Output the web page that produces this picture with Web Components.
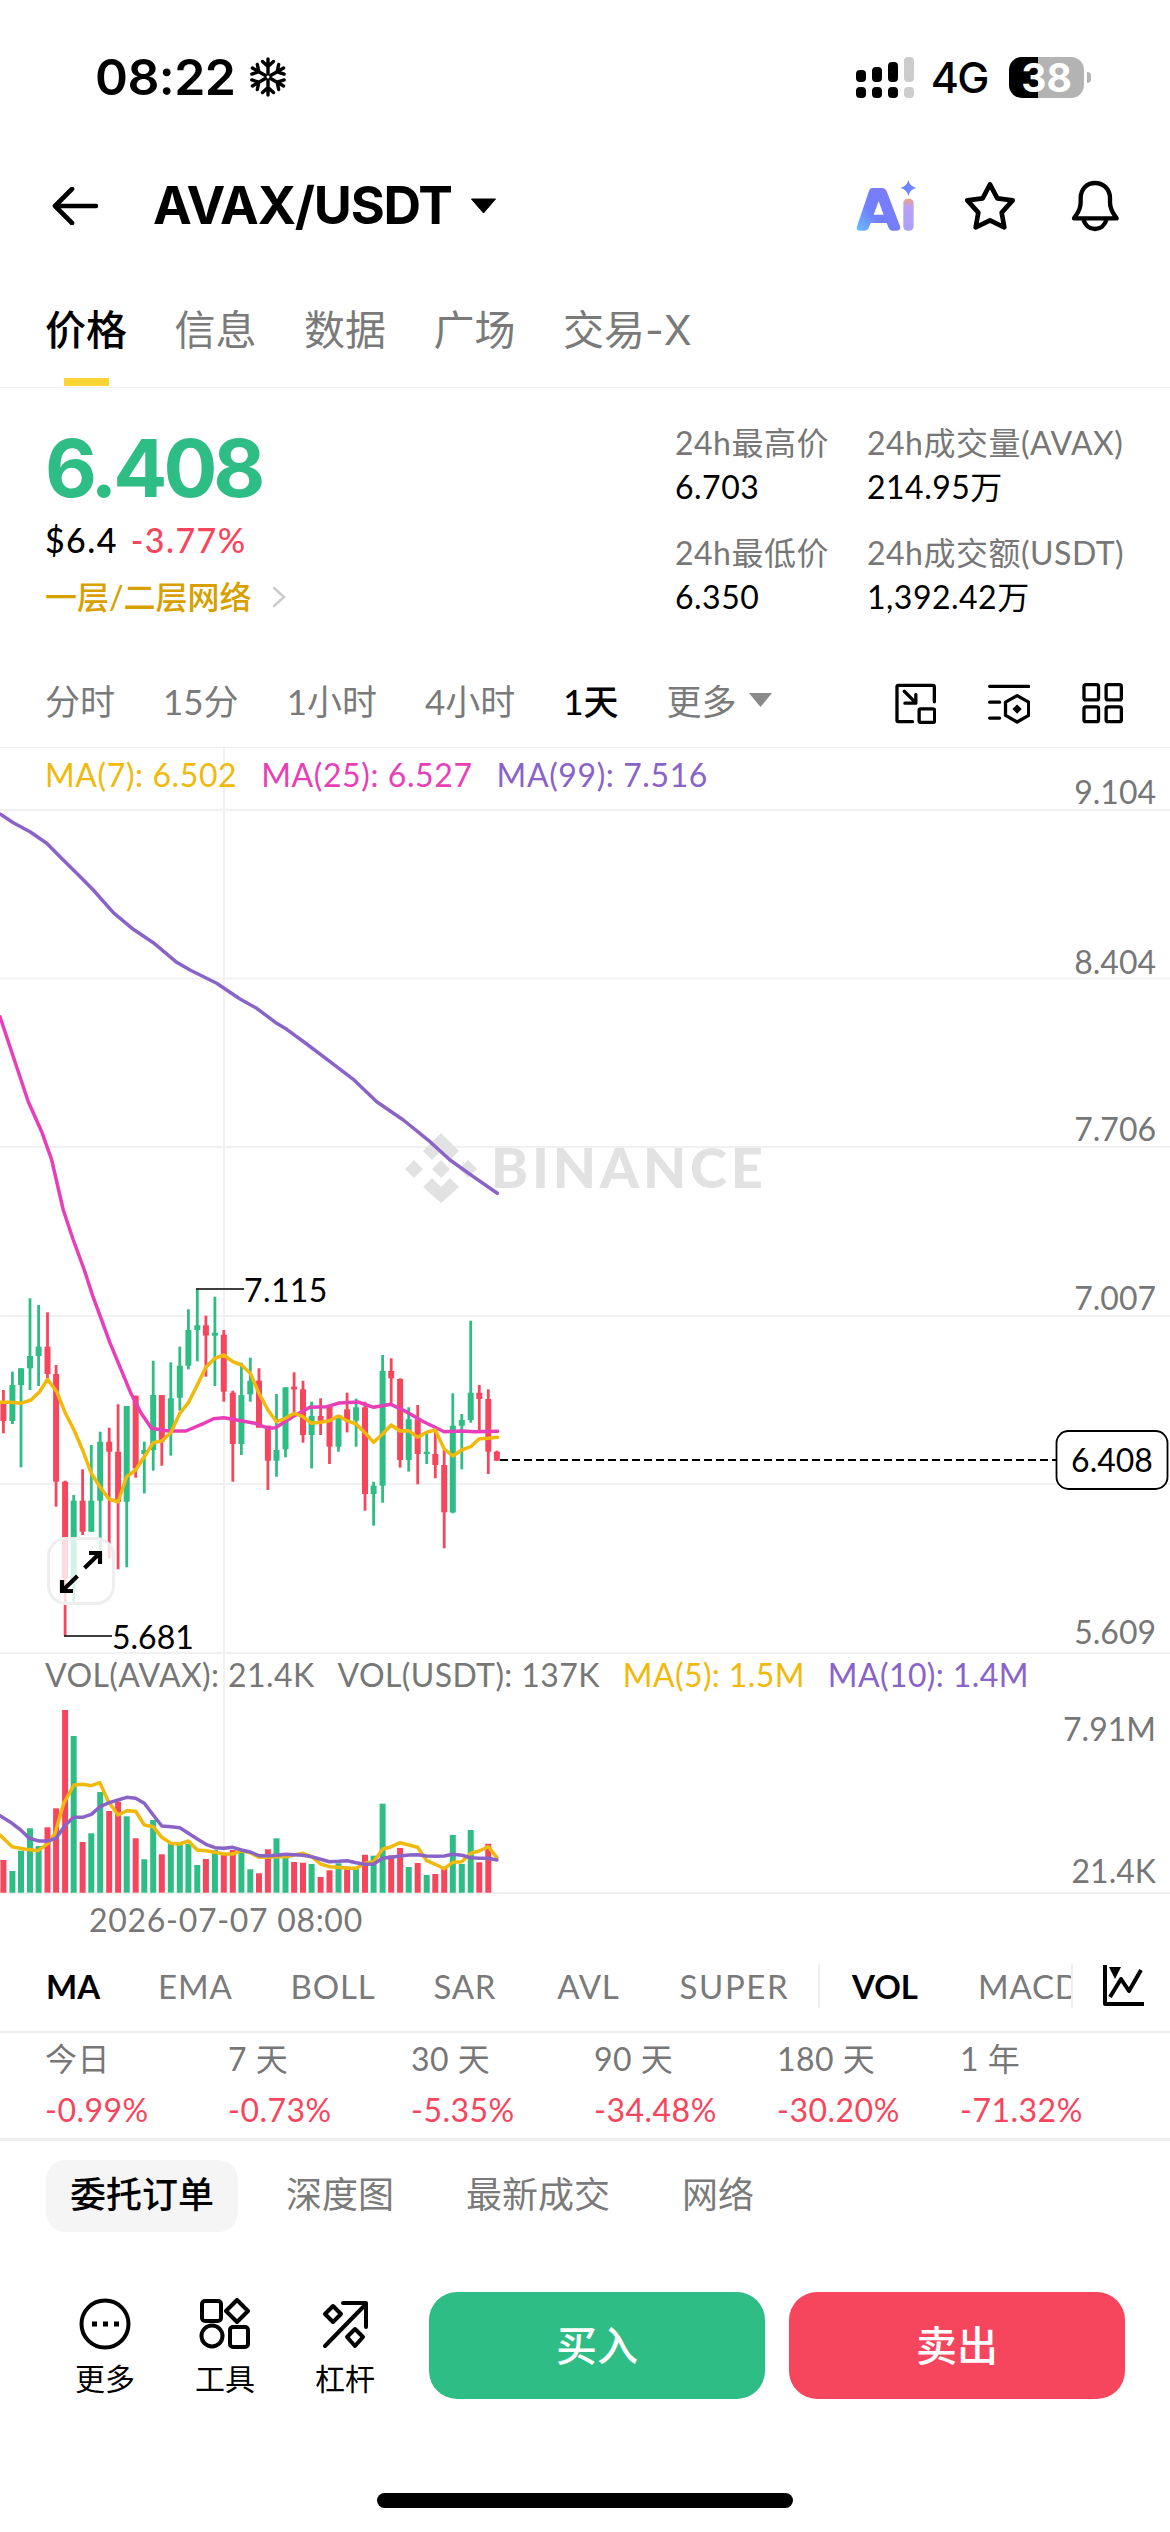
<!DOCTYPE html>
<html lang="zh">
<head>
<meta charset="utf-8">
<title>AVAX/USDT</title>
<style>
  html, body { margin: 0; background: #fff; }
  body {
    width: 1170px; height: 2532px; overflow: hidden; color: #000;
    font-family: Lato, "Noto Sans CJK SC", sans-serif;
  }
</style>
</head>
<body>
<status-bar></status-bar>
<pair-header></pair-header>
<market-tabs></market-tabs>
<price-summary>
  <stat-cell slot="stats"><span slot="label">24h最高价</span>6.703</stat-cell>
  <stat-cell slot="stats"><span slot="label">24h成交量(AVAX)</span>214.95万</stat-cell>
  <stat-cell slot="stats"><span slot="label">24h最低价</span>6.350</stat-cell>
  <stat-cell slot="stats"><span slot="label">24h成交额(USDT)</span>1,392.42万</stat-cell>
</price-summary>
<interval-bar></interval-bar>
<candle-chart></candle-chart>
<indicator-bar></indicator-bar>
<perf-row></perf-row>
<order-tabs></order-tabs>
<action-bar></action-bar>
<home-indicator></home-indicator>

<script>
const GREEN = '#2ebd85';
const RED = '#f6465d';

class Panel extends HTMLElement {
    connectedCallback() {
        this.attachShadow({ mode: 'open' });
        this.shadowRoot.innerHTML = `<style>${this.css()}</style>${this.html()}`;
    }
}

class StatusBar extends Panel {
    css() {
        return `
            :host { display: flex; height: 140px; box-sizing: border-box; padding: 57px 79px 0 95px; align-items: flex-start; }
            .time { font: 600 50px/40px Inter, sans-serif; letter-spacing: -0.6px; margin-right: 14px; }
            .right { margin-left: auto; display: flex; }
            .net { font: 500 43px/40px Inter, sans-serif; letter-spacing: -1.5px; margin: 0 21px 0 17px; }
            .batt { width: 75px; height: 41px; border-radius: 13px; background: linear-gradient(90deg, #000 29px, #b3b3b3 29px); color: #fff; font: 700 39px/41px Inter, sans-serif; text-align: center; }
            .nub { width: 4px; height: 11px; margin: 15px 0 0 3px; background: #b3b3b3; border-radius: 0 6px 6px 0; }
        `;
    }
    html() {
        return `
            <span class="time">08:22</span>
            <svg width="38" height="40" viewBox="-19 -20 38 40" fill="none" stroke="#000" stroke-width="3.4" stroke-linecap="round">
                ${[0, 60, 120, 180, 240, 300].map(a => `<g transform="rotate(${a})"><path d="M0 -3V-18M-5.5 -15.5L0 -10.5L5.5 -15.5"/></g>`).join('')}
            </svg>
            <div class="right">
                <svg width="58" height="41" viewBox="0 0 58 41">
                    <rect x="0" y="13" width="10" height="12" rx="4"/><rect x="16" y="10" width="10" height="15" rx="4"/><rect x="32" y="5" width="10" height="20" rx="4"/>
                    <rect x="48" y="0" width="10" height="25" rx="4" fill="#ccc"/>
                    <rect x="0" y="30" width="10" height="11" rx="4"/><rect x="16" y="30" width="10" height="11" rx="4"/><rect x="32" y="30" width="10" height="11" rx="4"/>
                    <rect x="48" y="30" width="10" height="11" rx="4" fill="#ccc"/>
                </svg>
                <span class="net">4G</span>
                <div class="batt">38</div>
                <div class="nub"></div>
            </div>
        `;
    }
}

class PairHeader extends Panel {
    css() {
        return `
            :host { display: flex; align-items: center; height: 130px; box-sizing: border-box; padding: 2px 0 0 52px; }
            .title { font: 700 52px/60px Inter, sans-serif; letter-spacing: -1.2px; margin-left: 55px; }
            .caret { margin-left: 18px; }
            .icons { margin-left: auto; display: flex; align-items: center; }
            svg { display: block; }
        `;
    }
    html() {
        return `
            <svg width="46" height="38" viewBox="51 188 46 38" fill="none" stroke="#000" stroke-width="4.6" stroke-linecap="round" stroke-linejoin="round"><path d="M95 207H54M71 190L54 207L71 224"/></svg>
            <span class="title">AVAX/USDT</span>
            <svg class="caret" width="27" height="16" viewBox="0 0 26 16"><path d="M1 1H25L13 15Z" stroke="#000" stroke-linejoin="round"/></svg>
            <div class="icons">
                <svg width="62" height="54" viewBox="105 448 186 162" style="margin-right:47px">
                    <defs>
                        <linearGradient id="ga" x1="0" y1="1" x2="0.8" y2="0.3"><stop offset="0" stop-color="#66c0ff"/><stop offset=".5" stop-color="#717fff"/><stop offset="1" stop-color="#7c7cf8"/></linearGradient>
                        <linearGradient id="gi" x1="0" y1="0" x2="0" y2="1"><stop offset="0" stop-color="#f2a27a"/><stop offset=".25" stop-color="#b9a0f5"/><stop offset="1" stop-color="#a9a3fb"/></linearGradient>
                    </defs>
                    <path fill="url(#ga)" fill-rule="evenodd" d="M154 475H182Q194 475 198 487L237 590Q240 603 226 603H214Q206 603 203 595L197 580H149L143 595Q140 603 132 603H118Q104 603 108 590L143 487Q146 475 154 475ZM173 515L158 555H188Z"/>
                    <rect x="247" y="507" width="31" height="96" rx="13" fill="url(#gi)"/>
                    <path fill="#6f86ff" d="M262 451Q266 470 286 475Q266 480 262 499Q258 480 238 475Q258 470 262 451Z"/>
                </svg>
                <svg width="50" height="50" viewBox="435 458 150 150" fill="none" stroke="#000" stroke-width="14" stroke-linejoin="round" style="margin-right:55px"><path d="M510 468L532 510L578 516L545 553L553 597L510 576L467 597L475 553L442 516L488 510Z"/></svg>
                <svg width="50" height="52" viewBox="750 453 150 156" fill="none" stroke="#000" stroke-width="13" stroke-linejoin="round" stroke-linecap="round" style="margin-right:50px"><path d="M762 568C772 552 782 545 782 520V508C782 480 800 462 825 462C850 462 870 480 870 508V520C870 545 880 552 890 568ZM790 570C795 590 810 600 825 600C840 600 855 590 860 570"/></svg>
            </div>
        `;
    }
}

class MarketTabs extends Panel {
    css() {
        return `
            :host { display: flex; gap: 47.5px; height: 118px; box-sizing: border-box; padding: 32px 0 0 45px; border-bottom: 1px solid #eee; font: 400 41px/50px "Noto Sans CJK SC", sans-serif; color: #7a7a7a; }
            .on { color: #000; font-weight: 500; position: relative; }
            .on::after { content: ""; position: absolute; left: 19px; width: 45px; height: 8px; top: 76px; background: #fcd535; }
            i { font: 400 41px/50px Inter, sans-serif; }
        `;
    }
    html() {
        return `<span class="on">价格</span><span>信息</span><span>数据</span><span>广场</span><span>交易<i>-X</i></span>`;
    }
}

class StatCell extends Panel {
    css() {
        return `
            :host { display: block; font-size: 32px; line-height: 44px; color: #000; letter-spacing: .5px; }
            .label { color: #777; display: block; }
        `;
    }
    html() { return `<span class="label"><slot name="label"></slot></span><slot></slot>`; }
}

class PriceSummary extends Panel {
    css() {
        return `
            :host { display: flex; height: 272px; box-sizing: border-box; padding: 33px 0 0 45px; }
            .left { width: 630px; padding-top: 7px; }
            .price { font: 700 80px/80px Inter, sans-serif; color: ${GREEN}; letter-spacing: -4px; }
            .sub { margin-top: 12px; font-size: 34px; line-height: 40px; font-weight: 500; letter-spacing: 1.4px; }
            .sub b { color: ${RED}; font-weight: 500; margin-left: 13px; }
            .net { margin-top: 17px; font-size: 32px; line-height: 40px; font-weight: 500; color: #d89f00; display: flex; align-items: center; }
            .net svg { margin-left: 20px; }
            .stats { display: grid; grid-template-columns: 192px auto; row-gap: 22px; align-content: start; }
        `;
    }
    html() {
        return `
            <div class="left">
                <div class="price">6.408</div>
                <div class="sub">$6.4<b>-3.77%</b></div>
                <div class="net">一层/二层网络<svg width="14" height="22" viewBox="0 0 14 22" fill="none" stroke="#ccc" stroke-width="2.6" stroke-linecap="round"><path d="M2 2L12 11L2 20"/></svg></div>
            </div>
            <div class="stats"><slot name="stats"></slot></div>
        `;
    }
}

class IntervalBar extends Panel {
    css() {
        return `
            :host { display: flex; align-items: center; height: 88px; box-sizing: border-box; padding: 0 47px 0 45px; border-bottom: 1px solid #eee; font-size: 35px; color: #7a7a7a; }
            .list { display: flex; gap: 48px; padding-bottom: 8px; align-items: center; }
            .on { color: #000; font-weight: 500; }
            .more { display: flex; align-items: center; gap: 12px; }
            .icons { margin-left: auto; display: flex; gap: 52px; }
            svg { display: block; }
        `;
    }
    html() {
        return `
            <div class="list">
                ${['分时', '15分', '1小时', '4小时'].map(t => `<span>${t}</span>`).join('')}
                <span class="on">1天</span>
                <span class="more">更多<svg width="23" height="14" viewBox="0 0 23 14"><path d="M0 0H23L11.5 14Z" fill="#8a8a8a"/></svg></span>
            </div>
            <div class="icons">
                <svg width="41" height="41" viewBox="102 93 124 124" fill="none" stroke="#000" stroke-width="10" stroke-linecap="round" stroke-linejoin="round"><path d="M155 210H112Q108 210 108 206V104Q108 100 112 100H216Q221 100 221 104V150M130 118L165 153M165 128V154M132 154H165"/><rect x="175" y="171" width="47" height="41" rx="5"/></svg>
                <svg width="42" height="41" viewBox="380 97 127 124" fill="none" stroke="#000" stroke-width="10" stroke-linecap="round" stroke-linejoin="round"><path d="M385 107H503M385 155H415M385 203H415M468 135L503 155V195L468 215L433 195V155Z"/><path d="M468 162L482 176L468 190L454 176Z" fill="#000" stroke="none"/></svg>
                <svg width="41" height="41" viewBox="661 95 124 124" fill="none" stroke="#000" stroke-width="10" stroke-linejoin="round"><rect x="667" y="100" width="44" height="46" rx="6"/><rect x="734" y="100" width="46" height="46" rx="6"/><rect x="667" y="167" width="44" height="45" rx="6"/><rect x="734" y="167" width="46" height="45" rx="6"/></svg>
            </div>
        `;
    }
}

// all chart data below was read off the picture: x in units of 1/2.904 px, y in units of 1/3 px
const CX = x => +(x / 2.904).toFixed(1);
const CY = y => +(1250 + y / 3).toFixed(1);
const VY = y => +(1640 + y / 3).toFixed(1);

const CANDLES = [
    [10,'r',420,550,460,513],[36,'g',365,522,405,513],[61,'g',355,652,355,405],[87,'g',145,420,318,355],
    [112,'g',165,408,290,318],[138,'r',187,385,290,372],[163,'r',345,770,372,695],[189,'r',692,1157,695,985],
    [214,'g',735,1055,752,1000],[240,'r',658,855,752,845],[265,'g',585,845,752,845],[291,'g',545,905,575,752],
    [317,'r',533,925,575,605],[343,'r',463,958,605,755],[368,'g',468,952,468,755],[394,'r',437,683,437,655],
    [419,'g',575,730,600,612],[445,'g',332,662,435,600],[470,'r',435,647,435,575],[496,'g',337,617,445,545],
    [522,'g',290,482,347,443],[547,'g',178,358,240,347],[573,'g',118,334,226,240],[598,'r',197,380,226,257],
    [624,'g',140,408,248,257],[650,'r',240,455,254,425],[676,'r',422,695,428,582],[701,'g',338,615,435,582],
    [727,'g',323,455,392,433],[752,'r',355,533,392,533],[778,'r',527,720,527,632],[803,'g',432,680,600,632],
    [829,'g',412,622,412,598],[854,'r',367,490,410,418],[880,'r',392,578,418,555],[905,'g',455,655,498,555],
    [931,'r',445,555,498,512],[957,'r',470,642,470,590],[983,'g',495,605,495,590],[1008,'r',428,547,478,510],
    [1034,'g',446,590,472,512],[1060,'r',455,782,472,732],[1085,'g',695,827,707,732],[1111,'g',315,758,363,707],
    [1136,'r',325,465,363,385],[1162,'r',385,653,387,630],[1187,'g',472,665,508,630],[1213,'r',465,703,508,612],
    [1239,'g',548,642,605,612],[1264,'r',540,685,612,645],[1290,'r',600,895,645,787],[1315,'g',430,790,527,787],
    [1341,'g',492,658,510,527],[1367,'g',212,518,428,510],[1392,'r',405,540,428,447],[1418,'r',418,672,447,605],
    [1443,'r',602,632,605,632]
];

const VOLS = [
    [10,'r',660],[36,'g',693],[61,'g',632],[87,'g',565],[112,'g',618],[138,'r',562],[163,'r',505],[189,'r',210],
    [214,'g',288],[240,'r',606],[265,'g',580],[291,'g',456],[317,'r',513],[343,'r',485],[368,'g',529],[394,'r',595],
    [419,'g',658],[445,'g',540],[470,'r',643],[496,'g',610],[522,'g',615],[547,'g',612],[573,'g',675],[598,'r',657],
    [624,'g',630],[650,'r',640],[676,'r',630],[701,'g',628],[727,'g',688],[752,'r',700],[778,'r',628],[803,'g',595],
    [829,'g',650],[854,'r',666],[880,'r',668],[905,'g',672],[931,'r',711],[957,'r',691],[983,'g',670],[1008,'r',680],
    [1034,'g',688],[1060,'r',644],[1085,'g',647],[1111,'g',491],[1136,'r',646],[1162,'r',624],[1187,'g',681],[1213,'r',669],
    [1239,'g',705],[1264,'r',702],[1290,'r',680],[1315,'g',585],[1341,'g',672],[1367,'g',570],[1392,'r',667],[1418,'r',611]
];

const MA7 = [[0,457],[30,457],[60,460],[90,450],[115,425],[138,388],[165,425],[190,490],[215,540],[240,600],[265,670],[290,710],[317,748],[343,755],[368,680],[394,660],[419,620],[445,578],[470,573],[496,548],[522,490],[547,458],[573,405],[598,352],[624,325],[650,315],[676,335],[701,345],[727,370],[752,430],[778,480],[803,515],[829,505],[854,490],[880,500],[905,520],[931,517],[957,512],[983,498],[1008,512],[1034,522],[1060,548],[1085,577],[1111,552],[1136,525],[1162,543],[1187,542],[1213,562],[1239,547],[1264,540],[1290,597],[1315,618],[1341,600],[1367,590],[1392,566],[1418,565],[1445,562]];
const MA25 = [[270,140],[320,280],[380,430],[410,490],[440,535],[490,543],[540,543],[590,521],[620,506],[650,503],[700,512],[740,520],[780,535],[800,533],[850,500],[900,472],[950,470],[985,459],[1040,456],[1085,472],[1135,463],[1180,485],[1230,515],[1290,545],[1340,543],[1380,545],[1445,544]];
// these two upper runs come from a crop at 3x, from (0,790)
const UP = ([x, y]) => [+(x / 3).toFixed(1), +(790 + y / 3).toFixed(1)];
const MA25_TOP = [[0,680],[40,800],[85,935],[125,1025],[155,1110],[190,1260],[220,1350],[253,1440]];
const MA99 = [[0,72],[40,98],[90,125],[140,160],[180,200],[230,250],[280,300],[340,368],[400,418],[460,458],[530,517],[570,540],[650,580],[720,627],[770,655],[830,700],[860,718],[920,762],[990,815],[1060,868],[1130,935],[1210,990],[1290,1055],[1350,1110],[1420,1160],[1492,1210]];
const VMA5 = [[0,585],[35,620],[70,627],[110,632],[140,610],[160,580],[185,490],[215,435],[240,433],[265,437],[290,428],[315,485],[343,525],[368,512],[394,514],[419,555],[445,560],[470,592],[496,610],[522,612],[547,603],[573,630],[598,632],[624,637],[650,642],[676,642],[701,632],[727,638],[752,652],[778,652],[803,650],[829,650],[854,645],[880,640],[905,650],[931,672],[957,680],[983,682],[1008,685],[1034,685],[1060,670],[1085,665],[1111,628],[1136,620],[1162,608],[1187,615],[1213,622],[1239,662],[1264,673],[1290,686],[1315,667],[1341,665],[1367,640],[1392,633],[1418,620],[1443,653]];
const VMA10 = [[0,527],[35,550],[60,570],[85,595],[112,603],[138,603],[163,595],[190,555],[214,532],[240,532],[265,523],[291,500],[317,488],[343,480],[368,472],[394,475],[419,490],[445,525],[470,558],[496,560],[522,563],[547,580],[573,597],[598,613],[624,623],[650,625],[676,622],[701,630],[727,636],[752,647],[778,647],[803,646],[829,643],[854,644],[880,646],[905,650],[931,658],[957,665],[983,664],[1008,662],[1034,668],[1060,673],[1085,672],[1111,655],[1136,652],[1162,648],[1187,645],[1213,644],[1239,648],[1264,649],[1290,648],[1315,643],[1341,646],[1367,653],[1392,655],[1418,655],[1443,660]];

function line(points, color, width) {
    const d = points.map(p => p.join(',')).join(' ');
    return `<polyline points="${d}" fill="none" stroke="${color}" stroke-width="${width}" stroke-linejoin="round" stroke-linecap="round"/>`;
}

class CandleChart extends Panel {
    css() {
        return `
            :host { display: block; position: relative; height: 1202px; }
            svg.plot { display: block; }
            svg text { font-family: Lato, sans-serif; font-size: 32px; }
            .legend { position: absolute; left: 45px; display: flex; font-size: 32px; line-height: 40px; color: #777; white-space: nowrap; }
            .a { top: 7px; gap: 24px; letter-spacing: .6px; }
            .b { top: 907px; gap: 23px; letter-spacing: .4px; }
            .expand { position: absolute; left: 47px; top: 789px; width: 68px; height: 68px; box-sizing: border-box; border: 3px solid #eee; border-radius: 19px; background: rgba(255,255,255,.8); }
            .expand svg { display: block; margin: -3px; }
            .y { color: #f0b90b; } .p { color: #e83fb8; } .v { color: #8a63c8; }
        `;
    }
    html() {
        const grid = [810, 978.5, 1147, 1316, 1484, 1653].map(y => `<rect x="0" y="${y - 1}" width="1170" height="2" fill="#f1f1f1"/>`).join('');
        const candles = CANDLES.map(([x, c, wt, wb, bt, bb]) => {
            const col = c === 'g' ? GREEN : RED;
            return `<rect x="${CX(x) - 1.4}" y="${CY(wt)}" width="2.8" height="${+((wb - wt) / 3).toFixed(1)}" fill="${col}"/>` +
                `<rect x="${CX(x) - 3}" y="${CY(bt)}" width="6" height="${+((bb - bt) / 3).toFixed(1)}" fill="${col}"/>`;
        }).join('');
        const vols = VOLS.map(([x, c, t]) => `<rect x="${CX(x) - 3}" y="${VY(t)}" width="6" height="${+((758 - t) / 3).toFixed(1)}" fill="${c === 'g' ? GREEN : RED}"/>`).join('');
        const axis = [['9.104', 804], ['8.404', 974], ['7.706', 1141], ['7.007', 1310], ['5.609', 1644], ['7.91M', 1741], ['21.4K', 1883]]
            .map(([t, y]) => `<text x="1156" y="${y}" text-anchor="end" fill="#777">${t}</text>`).join('');
        return `
            <svg class="plot" width="1170" height="1202" viewBox="0 748 1170 1202">
                ${grid}
                <rect x="223" y="748" width="2" height="1145" fill="#f1f1f1"/>
                <rect x="0" y="1892" width="1170" height="2" fill="#eee"/>
                <g fill="#e2e2e2">
                    <path d="M441 1133L459 1151L450 1160L441 1151L432 1160L423 1151ZM414 1160L423 1169L414 1178L405 1169ZM441 1160L450 1169L441 1178L432 1169ZM468 1160L477 1169L468 1178L459 1169ZM432 1178L441 1187L450 1178L459 1187L441 1203L423 1187Z"/>
                    <text x="491" y="1188" style="font-size:56px;font-weight:900;letter-spacing:3.8px">BINANCE</text>
                </g>
                ${candles}
                ${vols}
                ${line(MA99.map(UP), '#8a63c8', 3.5)}
                ${line(MA25_TOP.map(UP).concat(MA25.map(([x, y]) => [CX(x), CY(y)])), '#e83fb8', 3.5)}
                ${line(MA7.map(([x, y]) => [CX(x), CY(y)]), '#f0b90b', 3.5)}
                ${line(VMA5.map(([x, y]) => [CX(x), VY(y)]), '#f0b90b', 3.5)}
                ${line(VMA10.map(([x, y]) => [CX(x), VY(y)]), '#8a63c8', 3.5)}
                <path d="M196 1289H244M64 1636H112" stroke="#000" stroke-width="1.6" fill="none"/>
                <text x="244" y="1302" fill="#000" style="letter-spacing:.4px">7.115</text>
                <text x="112" y="1649" fill="#000">5.681</text>
                <path d="M500 1460H1056" stroke="#000" stroke-width="2" stroke-dasharray="8 4" fill="none"/>
                <rect x="1056.5" y="1431" width="111" height="58" rx="12" fill="#fff" stroke="#000" stroke-width="1.8"/>
                <text x="1112" y="1472" text-anchor="middle" fill="#000">6.408</text>
                ${axis}
                <text x="89" y="1932" fill="#777" style="letter-spacing:.7px">2026-07-07 08:00</text>
            </svg>
            <div class="legend a"><span class="y">MA(7): 6.502</span><span class="p">MA(25): 6.527</span><span class="v">MA(99): 7.516</span></div>
            <div class="legend b"><span>VOL(AVAX): 21.4K</span><span>VOL(USDT): 137K</span><span class="y">MA(5): 1.5M</span><span class="v">MA(10): 1.4M</span></div>
            <div class="expand"><svg width="68" height="68" viewBox="47 1537 68 68" fill="none" stroke="#000" stroke-width="4.2"><path d="M84.5 1568L100 1553M89 1553H100V1564M77.5 1576L62 1591M62 1580V1591H73"/></svg></div>
        `;
    }
}

class IndicatorBar extends Panel {
    css() {
        return `
            :host { display: flex; align-items: center; height: 83px; box-sizing: border-box; padding: 0 0 10px 46px; border-bottom: 2px solid #eee; font-size: 33px; letter-spacing: .8px; color: #7a7a7a; }
            .list { display: flex; gap: 58px; width: 772px; flex: none; white-space: nowrap; }
            .on { color: #000; font-weight: 700; letter-spacing: 0; }
            .avl { margin-left: 3px; }
            .super { margin-left: 2px; letter-spacing: 1.6px; }
            .rest { display: flex; gap: 60px; width: 255px; box-sizing: border-box; padding-left: 32px; overflow: hidden; border-left: 2px solid #eee; border-right: 2px solid #eee; height: 44px; line-height: 44px; white-space: nowrap; }
            svg { margin-left: 28px; display: block; }
        `;
    }
    html() {
        return `
            <div class="list"><span class="on">MA</span><span>EMA</span><span>BOLL</span><span>SAR</span><span class="avl">AVL</span><span class="super">SUPER</span></div>
            <div class="rest"><span class="on">VOL</span><span>MACD</span></div>
            <svg width="44" height="44" viewBox="1100 1965 44 44" fill="none" stroke="#000" stroke-width="4" stroke-linejoin="round"><path d="M1104 1966V2005H1143"/><path d="M1109 1998L1120 1980L1128 1992L1140 1971"/><path d="M1108 1968H1120L1114 1980Z" fill="#000" stroke="none"/></svg>
        `;
    }
}

class PerfRow extends Panel {
    css() {
        return `
            :host { display: grid; grid-template-columns: repeat(6, 183px); height: 108px; box-sizing: border-box; padding: 6px 0 0 45px; border-bottom: 3px solid #eee; font-size: 32px; line-height: 40px; letter-spacing: .5px; }
            .l { color: #777; display: block; margin-bottom: 11px; }
            .v { color: ${RED}; }
        `;
    }
    html() {
        return [['今日', '-0.99%'], ['7 天', '-0.73%'], ['30 天', '-5.35%'], ['90 天', '-34.48%'], ['180 天', '-30.20%'], ['1 年', '-71.32%']]
            .map(([l, v]) => `<div><span class="l">${l}</span><span class="v">${v}</span></div>`).join('');
    }
}

class OrderTabs extends Panel {
    css() {
        return `
            :host { display: flex; align-items: center; height: 72px; margin-top: 19px; padding-left: 46px; font-size: 36px; line-height: 68px; color: #7a7a7a; }
            .on { color: #000; font-weight: 500; background: #f5f5f5; border-radius: 20px; padding: 0 24px 4px; height: 68px; margin-right: 48px; }
            .o { margin-right: 72px; padding-bottom: 4px; }
        `;
    }
    html() {
        return `<span class="on">委托订单</span><span class="o">深度图</span><span class="o">最新成交</span><span class="o">网络</span>`;
    }
}

class ActionBar extends Panel {
    css() {
        return `
            :host { display: flex; align-items: flex-start; height: 188px; box-sizing: border-box; padding: 60px 45px 0 75px; }
            .tool { display: flex; flex-direction: column; align-items: center; width: 60px; margin-right: 60px; font-size: 30px; line-height: 40px; }
            .tool svg { display: block; margin-bottom: 8px; margin-top: 6px; }
            .btn { flex: 1; height: 107px; line-height: 107px; border-radius: 28px; text-align: center; color: #fff; font-size: 41px; font-weight: 500; }
            .buy { background: ${GREEN}; margin: 0 24px 0 -6px; }
            .sell { background: ${RED}; }
        `;
    }
    html() {
        return `
            <div class="tool"><svg width="52" height="52" viewBox="0 0 52 52" fill="none" stroke="#000" stroke-width="4"><circle cx="26" cy="26" r="23.5"/><path d="M13 26h5M24 26h5M35 26h5" stroke-width="5"/></svg>更多</div>
            <div class="tool"><svg width="52" height="52" viewBox="0 0 52 52" fill="none" stroke="#000" stroke-width="4" stroke-linejoin="round"><rect x="3" y="3" width="19" height="20" rx="3"/><path d="M38 2L49 13L38 24L27 13Z"/><circle cx="13" cy="38" r="10.5"/><rect x="31" y="29" width="18" height="20" rx="3"/></svg>工具</div>
            <div class="tool"><svg width="52" height="52" viewBox="0 0 52 52" fill="none" stroke="#000" stroke-width="4" stroke-linejoin="round" stroke-linecap="round"><path d="M6 48L47 6M24 5H47V29"/><path d="M14 8L22 16L14 24L6 16Z"/><path d="M36 31L44 39L36 48L28 39Z"/></svg>杠杆</div>
            <div class="btn buy">买入</div>
            <div class="btn sell">卖出</div>
        `;
    }
}

class HomeIndicator extends Panel {
    css() {
        return `
            :host { display: flex; justify-content: center; padding-top: 73px; }
            div { width: 416px; height: 15px; border-radius: 8px; background: #000; }
        `;
    }
    html() { return `<div></div>`; }
}

customElements.define('status-bar', StatusBar);
customElements.define('pair-header', PairHeader);
customElements.define('market-tabs', MarketTabs);
customElements.define('stat-cell', StatCell);
customElements.define('price-summary', PriceSummary);
customElements.define('interval-bar', IntervalBar);
customElements.define('candle-chart', CandleChart);
customElements.define('indicator-bar', IndicatorBar);
customElements.define('perf-row', PerfRow);
customElements.define('order-tabs', OrderTabs);
customElements.define('action-bar', ActionBar);
customElements.define('home-indicator', HomeIndicator);
</script>
</body>
</html>
